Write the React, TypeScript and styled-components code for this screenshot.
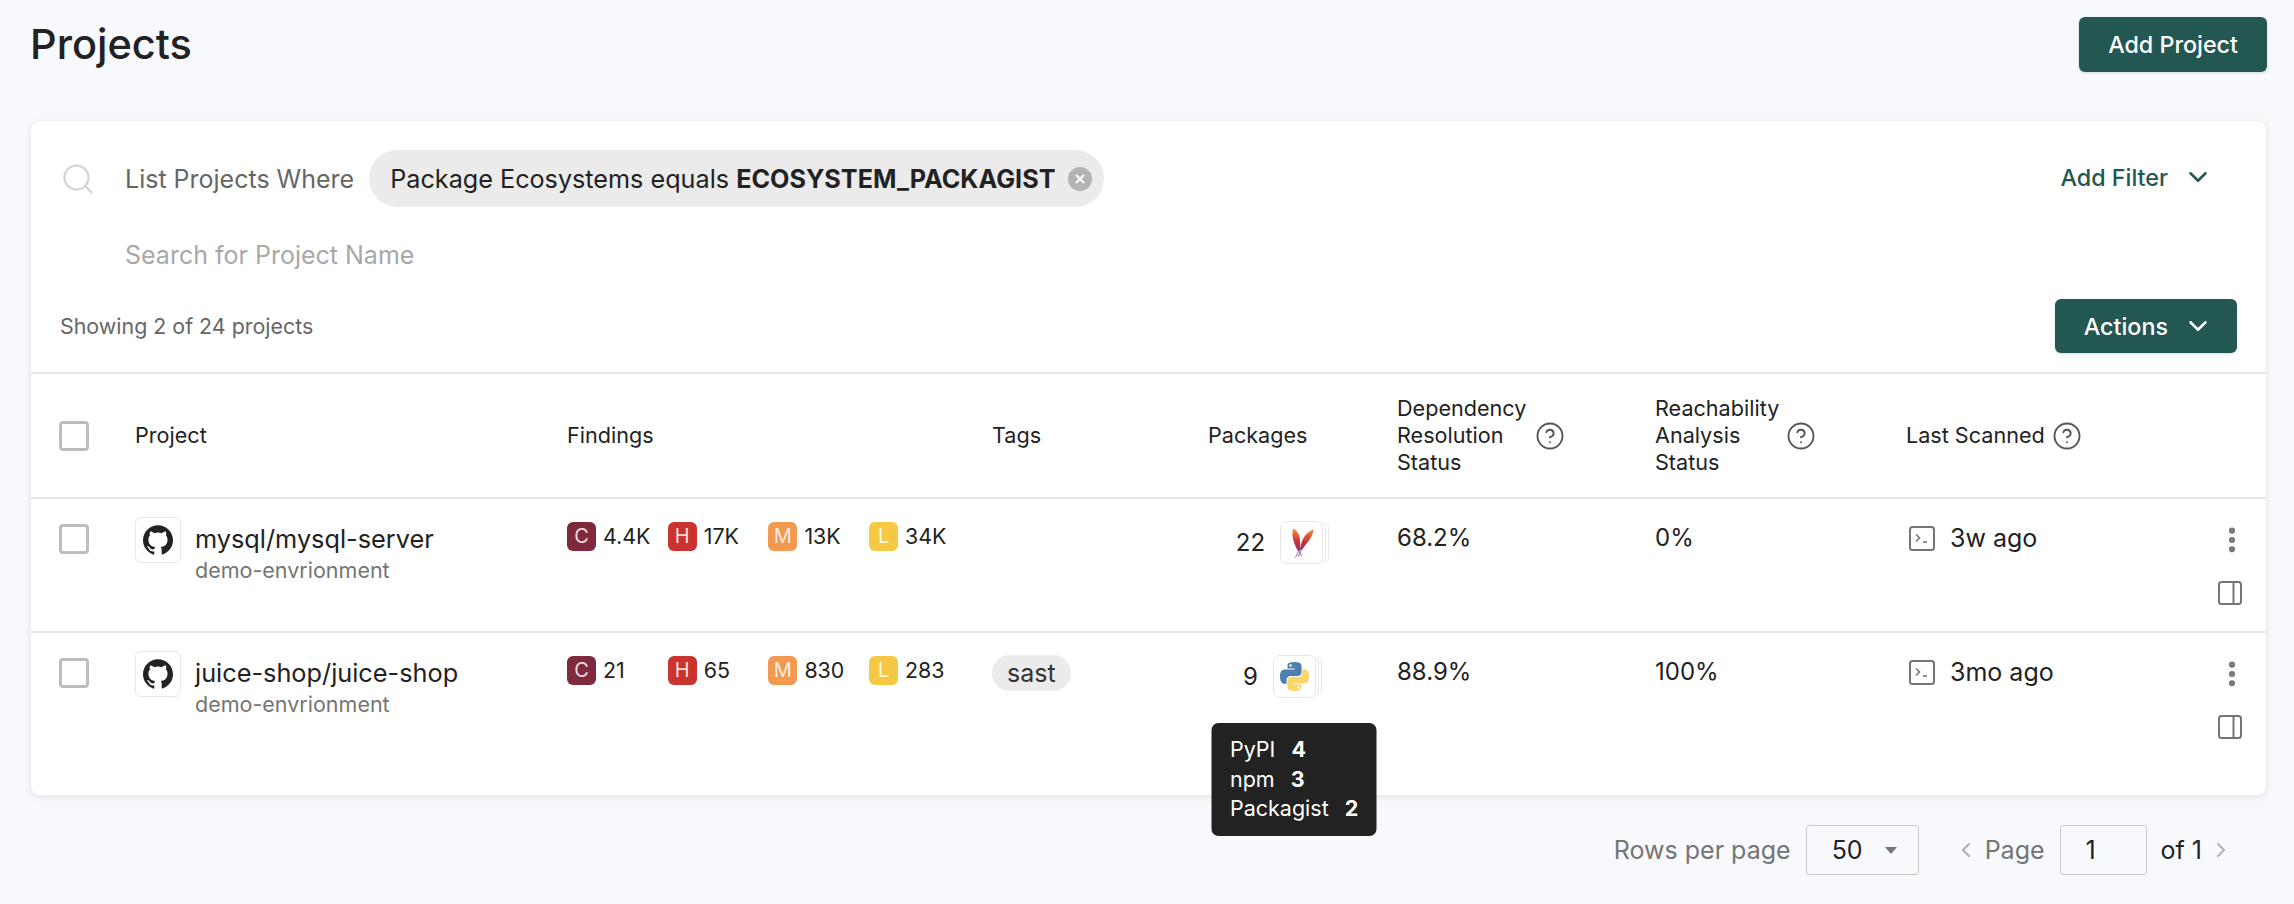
import styled, { createGlobalStyle } from 'styled-components';
import { ChevronDown, ChevronLeft, ChevronRight, CircleHelp, EllipsisVertical, Search } from 'lucide-react';
import { SiGithub } from 'react-icons/si';

const GlobalStyle = createGlobalStyle`
  html, body {
    margin: 0;
    height: 100%;
    background: #f8f9fc;
    color: #222;
    font-family: Inter, "Noto Sans", sans-serif;
    overflow: hidden;
  }
  * { box-sizing: border-box; }
`;

const COLUMNS = '76px 432px 425px 216px 189px 258px 251px 240px 1fr';

const Page = styled.div`
  padding: 17px 27px 0 30px;
  height: 904px;
`;
const TopBar = styled.div`
  display: flex;
  align-items: center;
  justify-content: space-between;
  margin-bottom: 48px;
`;
const Title = styled.h1`
  margin: 0;
  font-size: 41.500px;
  font-weight: 500;
  line-height: 55px;
  color: #222;
`;
const PrimaryButton = styled.button<{ $h: number; $right: number }>`
  display: flex;
  align-items: center;
  gap: 15px;
  height: ${(p) => p.$h}px;
  padding: 0 ${(p) => p.$right}px 0 29px;
  border: 0;
  border-radius: 6px;
  background: #235752;
  color: #fff;
  font: 450 23.300px Inter, sans-serif;
  box-shadow: 0 1px 3px rgba(0, 0, 0, 0.15);
`;
const Card = styled.section`
  background: #fff;
  border: 1px solid #eeeeee;
  border-radius: 10px;
  box-shadow: 0 2px 6px rgba(0, 0, 0, 0.08);
  height: 676px;
`;
const FilterRow = styled.div`
  display: flex;
  align-items: center;
  height: 57px;
  margin-top: 29px;
  padding: 0 53px 0 29px;
`;
const SearchSlot = styled.div`
  display: flex;
  width: 65px;
  color: #d4d4d4;
`;
const WhereLabel = styled.span`
  font-size: 25px;
  color: #666;
  margin-right: 15px;
`;
const Chip = styled.div`
  display: flex;
  align-items: center;
  gap: 13px;
  height: 57px;
  padding: 0 12px 0 21px;
  border-radius: 29px;
  background: #ebebeb;
  font-size: 25.200px;
  color: #222;
  b { font-weight: 700; }
`;
const ChipClose = styled.span`
  display: flex;
  align-items: center;
  justify-content: center;
  width: 24px;
  height: 24px;
  border-radius: 50%;
  background: #b3b3b3;
  color: #fff;
`;
const LinkButton = styled.button`
  display: flex;
  align-items: center;
  gap: 15px;
  margin: 0 0 3px auto;
  border: 0;
  background: none;
  padding: 0;
  color: #235752;
  font: 450 23.300px Inter, sans-serif;
`;
const SearchInput = styled.input`
  display: block;
  width: 600px;
  margin: 33px 0 0 94px;
  padding: 0;
  border: 0;
  outline: none;
  font: 400 25px/30px Inter, sans-serif;
  &::placeholder { color: #a8a8a8; opacity: 1; }
`;
const SummaryRow = styled.div`
  display: flex;
  align-items: center;
  justify-content: space-between;
  height: 54px;
  margin-top: 29px;
  padding: 0 29px;
  margin-bottom: 19px;
  font-size: 21.400px;
  color: #666;
`;
const HeadRow = styled.div`
  display: grid;
  grid-template-columns: ${COLUMNS};
  align-items: center;
  height: 125px;
  padding-left: 28px;
  border-top: 2px solid #e6e6e6;
  font-size: 21.600px;
  line-height: 27px;
  color: #222;
`;
const HeadWithHelp = styled.div`
  display: flex;
  align-items: center;
  gap: ${(p: { $gap: number }) => p.$gap}px;
  color: #222;
  svg { color: #555; flex: none; }
`;
const Row = styled.div`
  display: grid;
  grid-template-columns: ${COLUMNS};
  align-items: start;
  height: 134px;
  padding: 18px 0 0 28px;
  border-top: 2px solid #e6e6e6;
  font-size: 24px;
  line-height: 30px;
`;
const Check = styled.input.attrs({ type: 'checkbox' })`
  appearance: none;
  display: block;
  width: 30px;
  height: 30px;
  margin: 0;
  border: 3px solid #bdbdbd;
  border-radius: 4px;
  background: #fff;
`;
const CheckCell = styled.div`
  padding-top: 7px;
`;
const ProjectCell = styled.div`
  display: flex;
  gap: 14px;
`;
const RepoIcon = styled.div`
  display: flex;
  align-items: center;
  justify-content: center;
  width: 46px;
  height: 46px;
  border: 1px solid #e8e8e8;
  border-radius: 6px;
  color: #222;
  flex: none;
`;
const ProjectName = styled.div`
  font-size: 25.300px;
  font-weight: 400;
  line-height: 30px;
  margin-top: 7px;
`;
const ProjectEnv = styled.div`
  font-size: 21.500px;
  line-height: 28px;
  margin-top: 2px;
  color: #757575;
`;
const Findings = styled.div`
  display: grid;
  grid-template-columns: repeat(4, 100.700px);
  padding-top: 5px;
`;
const Finding = styled.div`
  display: flex;
  align-items: center;
  gap: 7px;
  font-size: 21.400px;
  line-height: 29px;
`;
const SeverityBadge = styled.span<{ $bg: string }>`
  display: flex;
  align-items: center;
  justify-content: center;
  width: 29px;
  height: 29px;
  border-radius: 6px;
  background: ${(p) => p.$bg};
  color: rgba(255, 255, 255, 0.85);
  font-size: 20px;
`;
const Tag = styled.span`
  display: inline-block;
  margin-top: 4px;
  padding: 0 15px;
  height: 36px;
  border-radius: 18px;
  background: #ebebeb;
  font-size: 25px;
  line-height: 36px;
  color: #333;
`;
const PackageCell = styled.div`
  display: flex;
  align-items: center;
  justify-content: center;
  gap: 15px;
  width: 151px;
  height: 43px;
  margin-top: 4px;
`;
const EcoIcon = styled.div`
  position: relative;
  display: flex;
  align-items: center;
  justify-content: center;
  width: 43px;
  height: 43px;
  margin-right: 8px;
  background: #fff;
  border: 1px solid #e6e6e6;
  border-radius: 7px;
  box-shadow: 3px 0 0 -1px #fff, 4px 0 0 -1px #e8e8e8, 7px 0 0 -2px #fff, 8px 0 0 -2px #e8e8e8;
`;
const Tooltip = styled.div`
  position: absolute;
  top: 67px;
  left: 50%;
  transform: translateX(-50%);
  z-index: 2;
  width: 165px;
  padding: 12px 18px 12px;
  border-radius: 7px;
  background: #222;
  color: #fff;
  font-size: 21.500px;
  line-height: 29.500px;
  white-space: nowrap;
  b { font-weight: 700; margin-left: 16px; }
`;
const Percent = styled.div`
  padding-top: 6px;
`;
const Scanned = styled.div`
  display: flex;
  align-items: center;
  gap: 15px;
  padding-top: 6px;
  margin-left: 3px;
  font-size: 25px;
`;
const RowActions = styled.div`
  display: flex;
  flex-direction: column;
  align-items: flex-end;
  gap: 25px;
  padding: 7px 24px 0 0;
  color: #757575;
  svg:first-child { margin-right: -6px; }
`;
const Pagination = styled.div`
  display: flex;
  align-items: center;
  justify-content: flex-end;
  height: 50px;
  margin-top: 29px;
  padding-right: 34px;
  font-size: 25px;
  color: #222;
`;
const PagerLabel = styled.span`
  color: #757575;
`;
const Field = styled.div<{ $w: number }>`
  display: flex;
  align-items: center;
  justify-content: space-between;
  width: ${(p) => p.$w}px;
  height: 50px;
  margin: 0 14px 0 15px;
  padding: 0 21px 0 25px;
  border: 1px solid #c9c9c9;
  border-radius: 3px;
`;
const Caret = styled.span`
  width: 0;
  height: 0;
  border-left: 6px solid transparent;
  border-right: 6px solid transparent;
  border-top: 7px solid #757575;
`;
const PagerArrow = styled.span<{ $m: string }>`
  display: flex;
  color: #b0b0b0;
  margin: ${(p) => p.$m};
`;

function TerminalIcon() {
  return (
    <svg width="26" height="25" viewBox="0 0 26 25" fill="none" stroke="#757575" strokeWidth="2">
      <rect x="1" y="1" width="24" height="23" rx="2.500" />
      <path d="M7 8.500l3.500 3.500L7 15.500" strokeWidth="1.600" />
      <path d="M14 16h4" strokeWidth="1.600" />
    </svg>
  );
}

function PanelIcon() {
  return (
    <svg width="24" height="24" viewBox="0 0 24 24" fill="none" stroke="#757575" strokeWidth="2">
      <rect x="1" y="1" width="22" height="22" rx="2.500" />
      <path d="M15.500 1v22" />
    </svg>
  );
}

function ApacheIcon() {
  return (
    <svg width="28" height="32" viewBox="0 0 28 32" fill="none">
      <defs>
        <linearGradient id="feather" gradientUnits="userSpaceOnUse" x1="0" y1="1" x2="0" y2="25">
          <stop offset="0" stopColor="#f2a33e" />
          <stop offset="0.32" stopColor="#dd5a39" />
          <stop offset="0.6" stopColor="#c4303a" />
          <stop offset="0.85" stopColor="#a82f5e" />
          <stop offset="1" stopColor="#7d3f96" />
        </linearGradient>
      </defs>
      <path d="M5 1.500C8 2.500 10.500 5.500 11.500 9.500C12.200 13 12.300 18 12 23.500L10 24C7.500 20 5 14 4.500 8.500C4.300 5.500 4.500 3 5 1.500z" fill="url(#feather)" />
      <path d="M25.500 2.500C25.500 5.500 24 9 21.500 12.500C19 16 16.500 19.500 13.500 23.500L12 23C12.500 18.500 13.500 14.500 15.500 11C18 6.500 21.500 4 25.500 2.500z" fill="url(#feather)" />
      <path d="M11 23l-3.500 7.500M11.500 23.500l2 5.500M12.500 23.500l-2 6.500" stroke="#8a5aa8" strokeWidth="0.900" />
    </svg>
  );
}

function PythonIcon() {
  const blue =
    'M54.900 0C26.800 0 28.600 12.200 28.600 12.200l0 12.600h26.800v3.800H17.900S0 26.600 0 54.900s15.600 27.300 15.600 27.300h9.300V69s-.5-15.600 15.400-15.600h26.500s14.900.2 14.900-14.400V14.900S83.900 0 54.900 0zM40.200 8.500a4.800 4.800 0 1 1 0 9.600 4.800 4.800 0 0 1 0-9.600z';
  return (
    <svg width="29" height="29" viewBox="0 0 110 110">
      <path d={blue} fill="#4a7fae" />
      <path d={blue} fill="#f8d667" transform="rotate(180 55 55)" />
    </svg>
  );
}

const severities = [
  { key: 'C', color: '#7f2a3c' },
  { key: 'H', color: '#c9342f' },
  { key: 'M', color: '#f2984f' },
  { key: 'L', color: '#f6c945' },
];

const projects = [
  {
    name: 'mysql/mysql-server',
    findings: ['4.4K', '17K', '13K', '34K'],
    packages: 22,
    ecosystem: 'apache',
    resolution: '68.2%',
    reachability: '0%',
    scanned: '3w ago',
  },
  {
    name: 'juice-shop/juice-shop',
    findings: ['21', '65', '830', '283'],
    tag: 'sast',
    packages: 9,
    ecosystem: 'python',
    resolution: '88.9%',
    reachability: '100%',
    scanned: '3mo ago',
  },
];

export default function App() {
  return (
    <Page>
      <GlobalStyle />
      <TopBar>
        <Title>Projects</Title>
        <PrimaryButton $h={55} $right={29}>Add Project</PrimaryButton>
      </TopBar>
      <Card>
        <FilterRow>
          <SearchSlot>
            <Search size={36} strokeWidth={1.5} />
          </SearchSlot>
          <WhereLabel>List Projects Where</WhereLabel>
          <Chip>
            <span>
              Package Ecosystems equals <b>ECOSYSTEM_PACKAGIST</b>
            </span>
            <ChipClose>
              <svg width="12" height="12" viewBox="0 0 12 12" stroke="#fff" strokeWidth="2">
                <path d="M2 2l8 8M10 2l-8 8" />
              </svg>
            </ChipClose>
          </Chip>
          <LinkButton>
            Add Filter
            <ChevronDown size={30} strokeWidth={2} />
          </LinkButton>
        </FilterRow>
        <SearchInput placeholder="Search for Project Name" />
        <SummaryRow>
          <span>Showing 2 of 24 projects</span>
          <PrimaryButton $h={54} $right={24}>
            Actions
            <ChevronDown size={30} strokeWidth={2} />
          </PrimaryButton>
        </SummaryRow>
        <HeadRow>
          <Check />
          <div>Project</div>
          <div>Findings</div>
          <div>Tags</div>
          <div>Packages</div>
          <HeadWithHelp $gap={9}>
            <div>
              Dependency
              <br />
              Resolution
              <br />
              Status
            </div>
            <CircleHelp size={30} strokeWidth={1.5} />
          </HeadWithHelp>
          <HeadWithHelp $gap={7}>
            <div>
              Reachability
              <br />
              Analysis
              <br />
              Status
            </div>
            <CircleHelp size={30} strokeWidth={1.5} />
          </HeadWithHelp>
          <HeadWithHelp $gap={7}>
            <div>Last Scanned</div>
            <CircleHelp size={30} strokeWidth={1.5} />
          </HeadWithHelp>
        </HeadRow>
        {projects.map((project) => (
          <Row key={project.name}>
            <CheckCell>
              <Check />
            </CheckCell>
            <ProjectCell>
              <RepoIcon>
                <SiGithub size={30} />
              </RepoIcon>
              <div>
                <ProjectName>{project.name}</ProjectName>
                <ProjectEnv>demo-envrionment</ProjectEnv>
              </div>
            </ProjectCell>
            <Findings>
              {severities.map((s, i) => (
                <Finding key={s.key}>
                  <SeverityBadge $bg={s.color}>{s.key}</SeverityBadge>
                  {project.findings[i]}
                </Finding>
              ))}
            </Findings>
            <div>{project.tag && <Tag>{project.tag}</Tag>}</div>
            <PackageCell>
              {project.packages}
              <EcoIcon>
                {project.ecosystem === 'apache' ? <ApacheIcon /> : <PythonIcon />}
                {project.ecosystem === 'python' && (
                  <Tooltip>
                    <div>
                      PyPI<b>4</b>
                    </div>
                    <div>
                      npm<b>3</b>
                    </div>
                    <div>
                      Packagist<b>2</b>
                    </div>
                  </Tooltip>
                )}
              </EcoIcon>
            </PackageCell>
            <Percent>{project.resolution}</Percent>
            <Percent>{project.reachability}</Percent>
            <Scanned>
              <TerminalIcon />
              {project.scanned}
            </Scanned>
            <RowActions>
              <EllipsisVertical size={32} strokeWidth={2.6} />
              <PanelIcon />
            </RowActions>
          </Row>
        ))}
      </Card>
      <Pagination>
        <PagerLabel>Rows per page</PagerLabel>
        <Field $w={113}>
          50
          <Caret />
        </Field>
        <PagerArrow $m="0 7px 0 21px">
          <ChevronLeft size={24} />
        </PagerArrow>
        <PagerLabel>Page</PagerLabel>
        <Field $w={87}>1</Field>
        <span>of 1</span>
        <PagerArrow $m="0 0 0 7px">
          <ChevronRight size={24} />
        </PagerArrow>
      </Pagination>
    </Page>
  );
}
